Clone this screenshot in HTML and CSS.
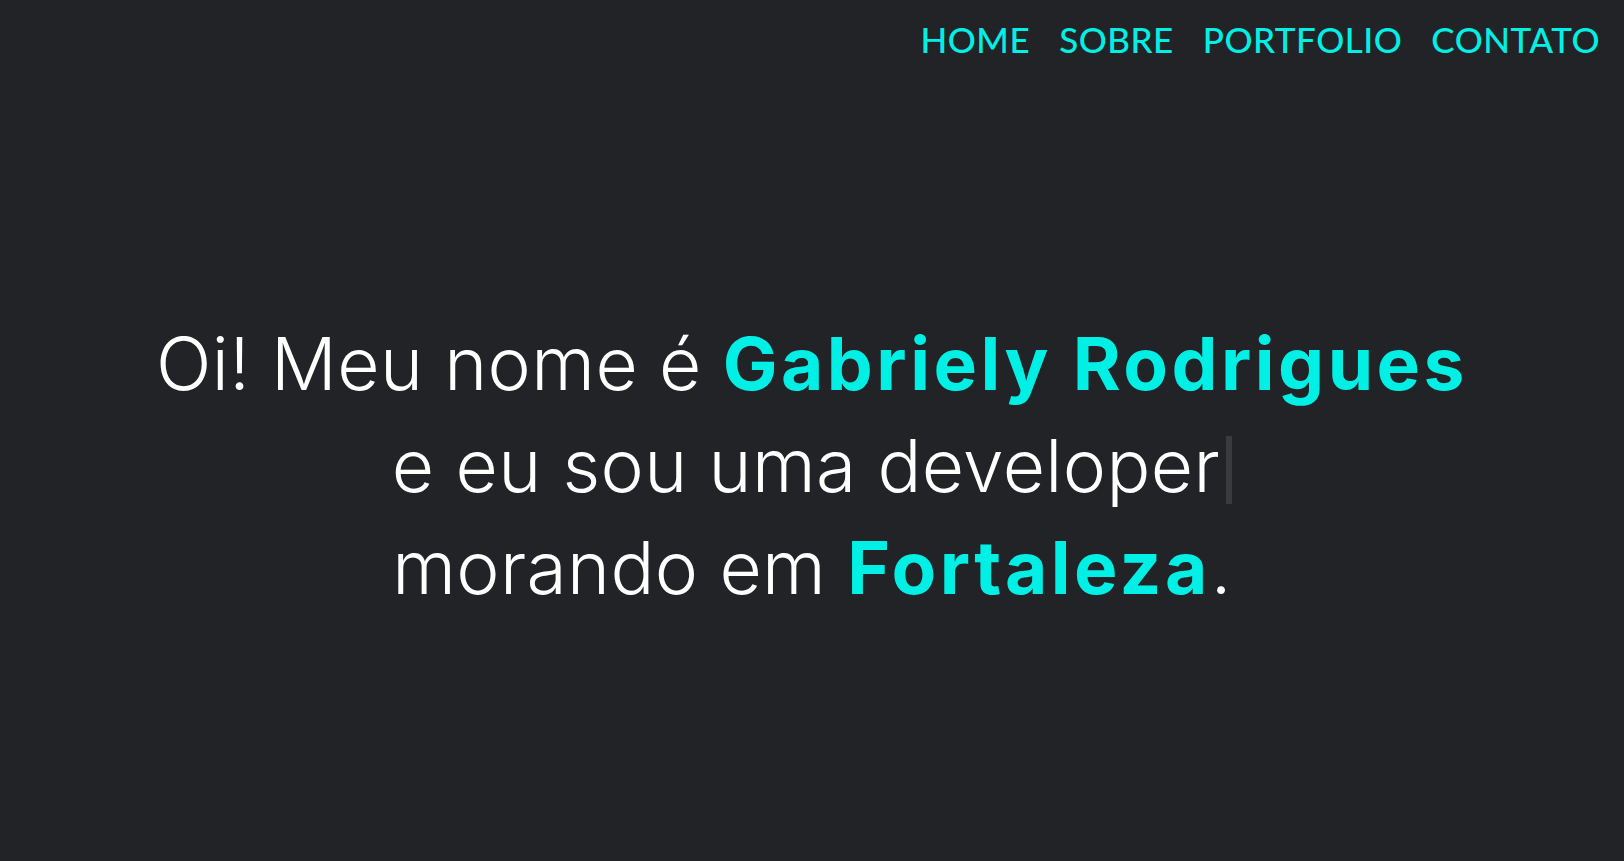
FILE: index.html
```html
<!DOCTYPE html>
<html lang="pt-BR">
<head>
<meta charset="utf-8">
<title>Gabriely Rodrigues</title>
<link rel="stylesheet" href="styles.css">
</head>
<body>
<header class="topbar">
  <nav class="menu">
    <a href="#home" class="menu-link">HOME</a>
    <a href="#sobre" class="menu-link">SOBRE</a>
    <a href="#portfolio" class="menu-link">PORTFOLIO</a>
    <a href="#contato" class="menu-link">CONTATO</a>
  </nav>
</header>
<main class="hero">
  <h1 class="intro">
    <span class="line">Oi! Meu nome é <strong class="hl">Gabriely Rodrigues</strong></span>
    <span class="line">e eu sou uma developer<span class="cursor"></span></span>
    <span class="line">morando em <strong class="hl">Fortaleza</strong>.</span>
  </h1>
</main>
</body>
</html>
```
FILE: styles.css
```css
html, body {
  margin: 0;
  padding: 0;
  height: 100%;
}
body {
  background: #222326;
  font-family: "Lato", "Noto Sans", sans-serif;
  color: #ffffff;
  display: flex;
  flex-direction: column;
}
.topbar {
  display: flex;
  justify-content: flex-end;
  padding: 18px 24px 0 0;
}
.menu {
  display: flex;
  gap: 29px;
}
.menu-link {
  color: #00f0e6;
  text-decoration: none;
  font-size: 35px;
  line-height: 42px;
  font-weight: 500;
  letter-spacing: 0.5px;
}
.hero {
  flex: 1;
  display: flex;
  justify-content: center;
  align-items: flex-start;
  padding-top: 253px;
}
.intro {
  margin: 0;
  font-family: "Inter", "Lato", sans-serif;
  font-weight: 300;
  font-size: 73px;
  line-height: 102px;
  letter-spacing: 0.4px;
  text-align: center;
  display: flex;
  flex-direction: column;
  align-items: center;
}
.line {
  display: block;
  white-space: nowrap;
}
.hl {
  color: #00f0e6;
  font-weight: 700;
  letter-spacing: 3.5px;
}
.cursor {
  display: inline-block;
  width: 6px;
  height: 68px;
  background: #3a3b3e;
  vertical-align: -12px;
  margin-left: 6px;
}
```
